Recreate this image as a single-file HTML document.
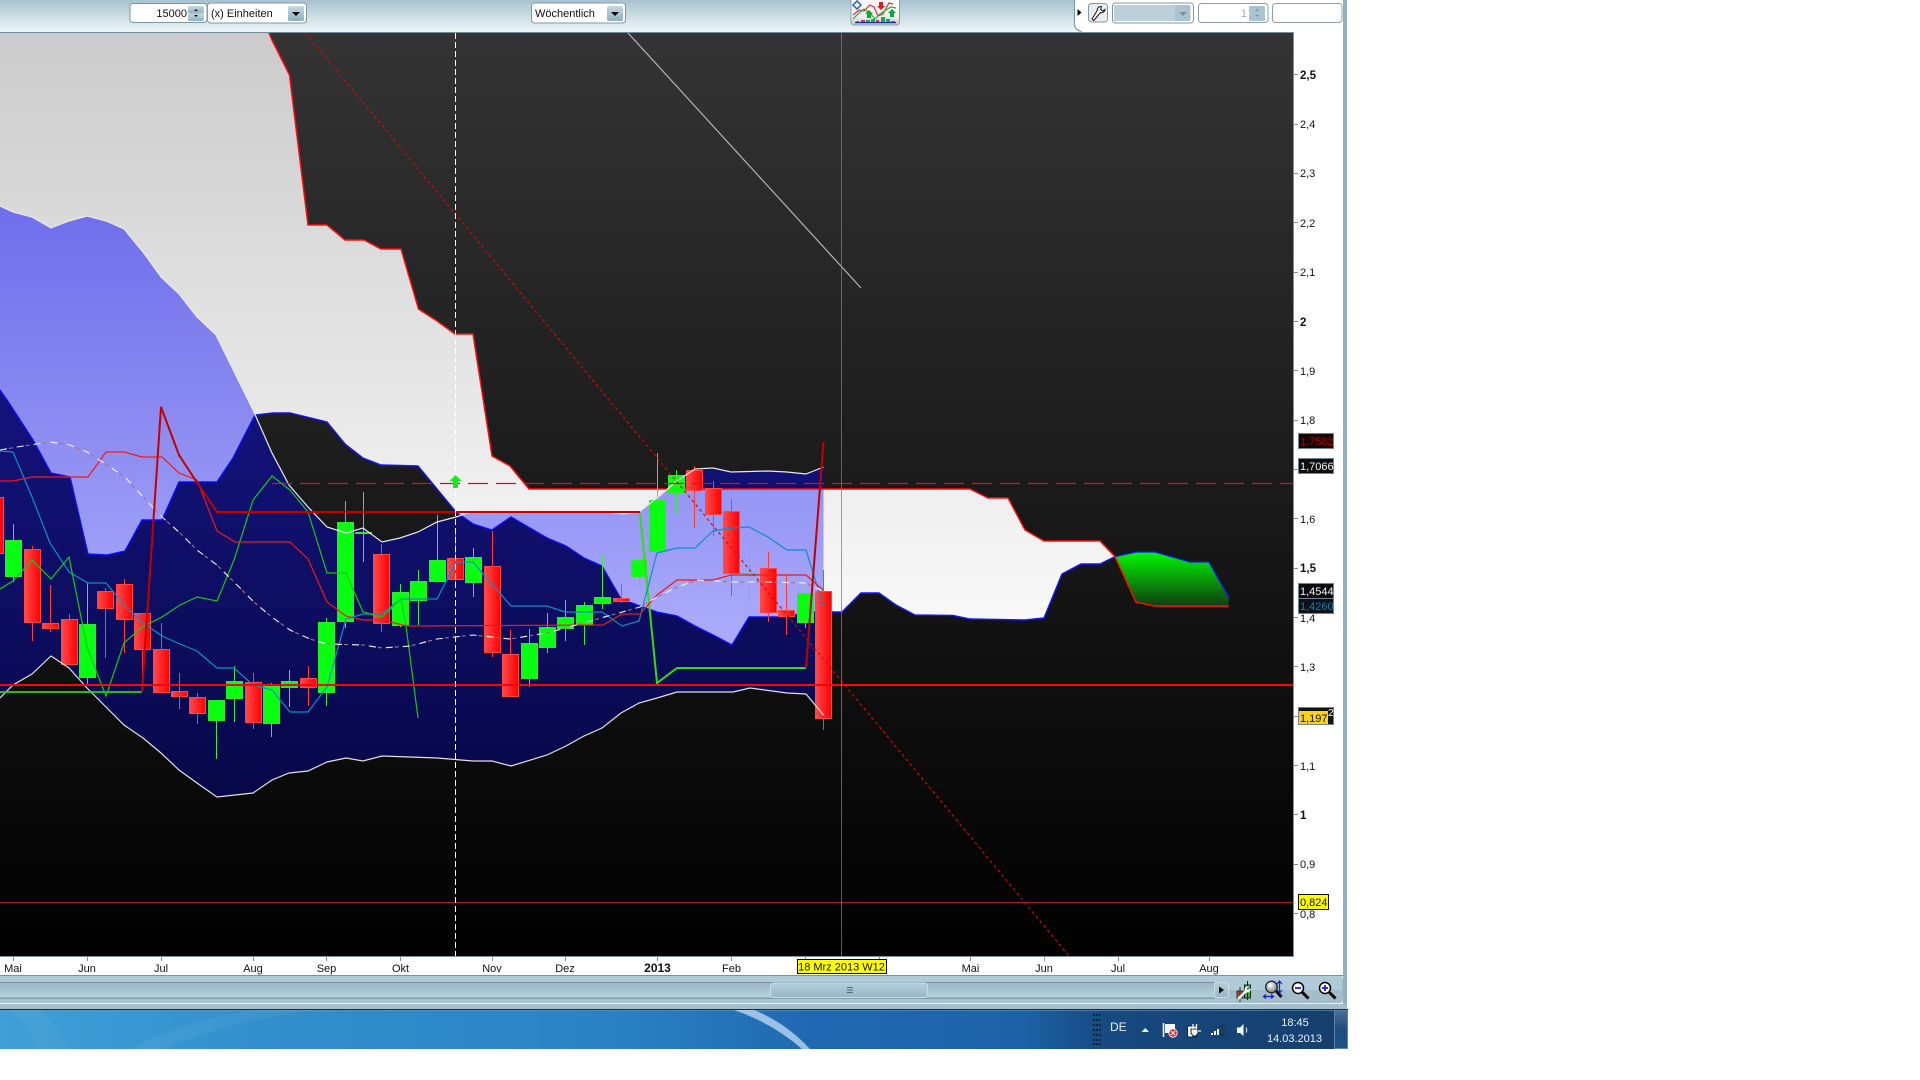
<!DOCTYPE html>
<html><head><meta charset="utf-8"><title>Chart</title>
<style>
html,body{margin:0;padding:0;background:#fff;width:1920px;height:1080px;overflow:hidden}
svg{position:absolute;left:0;top:0;display:block}
text{font-family:"Liberation Sans",sans-serif;font-size:11px;fill:#111}
.ya text{font-size:11px}
.ya text.b{font-size:11.5px}
.xa text{text-anchor:middle}
.b{font-weight:bold}
.w line{stroke-width:1}
.wr line{stroke:#ff3c3c}
.wg line{stroke:#3ee83e}
.cr rect{fill:url(#rc);stroke:#ff4646;stroke-width:1}
.cg rect{fill:#08ff10;stroke:#2cea2c;stroke-width:1}
</style></head><body>
<svg width="1920" height="1080" viewBox="0 0 1920 1080" xmlns="http://www.w3.org/2000/svg">
<defs>
<linearGradient id="bg" gradientUnits="userSpaceOnUse" x1="0" y1="33" x2="0" y2="956"><stop offset="0" stop-color="#343434"/><stop offset="1" stop-color="#000"/></linearGradient>
<linearGradient id="cl" gradientUnits="userSpaceOnUse" x1="0" y1="33" x2="0" y2="700"><stop offset="0" stop-color="#cbcbcb"/><stop offset="1" stop-color="#fff"/></linearGradient>
<linearGradient id="bb" gradientUnits="userSpaceOnUse" x1="0" y1="33" x2="0" y2="956"><stop offset="0" stop-color="#00f" stop-opacity=".56"/><stop offset="1" stop-color="#00f" stop-opacity=".19"/></linearGradient>
<linearGradient id="gk" gradientUnits="userSpaceOnUse" x1="0" y1="552" x2="0" y2="606"><stop offset="0" stop-color="#00f800"/><stop offset="1" stop-color="#0f3d0f"/></linearGradient>
<linearGradient id="rc" x1="0" x2="1" y1="0" y2="0"><stop offset="0" stop-color="#ff4a4a"/><stop offset="1" stop-color="#ff0000"/></linearGradient>
<linearGradient id="tb" x1="0" x2="0" y1="0" y2="1"><stop offset="0" stop-color="#a7c3cf"/><stop offset="1" stop-color="#f0f6f8"/></linearGradient>
<linearGradient id="btn" x1="0" x2="0" y1="0" y2="1"><stop offset="0" stop-color="#c6dae2"/><stop offset="1" stop-color="#8fb0be"/></linearGradient>
<linearGradient id="trk" x1="0" x2="0" y1="0" y2="1"><stop offset="0" stop-color="#98b4c0"/><stop offset="1" stop-color="#b6d5de"/></linearGradient>
<linearGradient id="thm" x1="0" x2="0" y1="0" y2="1"><stop offset="0" stop-color="#b4d0da"/><stop offset="1" stop-color="#98b6c3"/></linearGradient>
<linearGradient id="task" x1="0" x2="1" y1="0" y2="0"><stop offset="0" stop-color="#3f9fd6"/><stop offset=".2" stop-color="#328fcb"/><stop offset=".45" stop-color="#2a82c4"/><stop offset=".6" stop-color="#2069b2"/><stop offset=".76" stop-color="#1d62a6"/><stop offset=".82" stop-color="#174a80"/><stop offset="1" stop-color="#163e6c"/></linearGradient>
<linearGradient id="icn" x1="0" x2="0" y1="0" y2="1"><stop offset="0" stop-color="#fff"/><stop offset=".7" stop-color="#eee"/><stop offset="1" stop-color="#c4ccd0"/></linearGradient>
<linearGradient id="sd" x1="0" x2="0" y1="0" y2="1"><stop offset="0" stop-color="#4a6f94"/><stop offset=".5" stop-color="#1f4c7c"/><stop offset="1" stop-color="#1d5288"/></linearGradient>
<radialGradient id="glass" cx=".4" cy=".35" r=".7"><stop offset="0" stop-color="#fff"/><stop offset="1" stop-color="#777"/></radialGradient>
<clipPath id="ch"><rect x="0" y="33" width="1293" height="923"/></clipPath>
</defs>

<!-- top toolbar -->
<rect x="0" y="0" width="1075" height="32" fill="url(#tb)"/>
<rect x="0" y="32" width="1294" height="1" fill="#748c9a"/>
<path d="M1074.5 0V24Q1074.5 29 1079 30.5L1083 33" fill="none" stroke="#7f98a6" stroke-width="1.2"/>

<rect x="130" y="3.5" width="77" height="19" rx="3" fill="#fff" stroke="#8098a5"/>
<text x="187" y="17" text-anchor="end">15000</text>
<rect x="188" y="6" width="16" height="7.5" rx="1.5" fill="url(#btn)"/><rect x="188" y="13.5" width="16" height="7.5" rx="1.5" fill="url(#btn)"/>
<path d="M194 11h4l-2-2z M194 15h4l-2 2z" fill="#111"/>
<rect x="207.500" y="3" width="99" height="20" rx="3" fill="#fff" stroke="#8098a5"/>
<text x="211" y="17">(x) Einheiten</text>
<rect x="288" y="6" width="16" height="15" rx="1.5" fill="url(#btn)"/><path d="M292 12h8l-4 4z" fill="#000"/>
<rect x="531.500" y="3" width="94" height="20" rx="3" fill="#fff" stroke="#8098a5"/>
<text x="535" y="17">Wöchentlich</text>
<rect x="607" y="6" width="16" height="15" rx="1.5" fill="url(#btn)"/><path d="M611 12h8l-4 4z" fill="#000"/>

<!-- indicator button -->
<rect x="851" y="-3" width="48.500" height="28" rx="3" fill="url(#icn)" stroke="#8d9ea8"/>
<path d="M857 1l4 4-4 4-4-4z" fill="#fff" stroke="#1c5fd0" stroke-width="1.5"/>
<path d="M853 15l6-5 5 1 6-6 4 2 4 9 5-2 6-11 4 1" fill="none" stroke="#d9333a" stroke-width="1.2"/>
<path d="M853 19l6-6 5-4 6 4 5 6 5-5 6-4 5-3 5 1" fill="none" stroke="#22b03a" stroke-width="1.2"/>
<path d="M869 10l4 4h-2v4h-4v-4h-2z M892 9l4 4h-2v4h-4v-4h-2z" fill="#0fa83a"/>
<path d="M881 10l4-4h-2V2h-4v4h-2z" fill="#e01a22"/>
<g fill="#13b03f"><rect x="856" y="21" width="3" height="1"/><rect x="866" y="20" width="4" height="2"/><rect x="871" y="19" width="4" height="3"/><rect x="881" y="17" width="4" height="5"/><rect x="886" y="19" width="4" height="3"/></g>
<g fill="#e62e3a"><rect x="861" y="20" width="4" height="2"/><rect x="876" y="20" width="3" height="2"/><rect x="891" y="21" width="4" height="1"/></g>
<rect x="855" y="22" width="41" height="1.200" fill="#1228c8"/>

<!-- right controls -->
<path d="M1077.500 9v7l4-3.500z" fill="#000"/>
<rect x="1088.500" y="3.500" width="19" height="18.500" rx="3" fill="#e9eef0" stroke="#8098a5"/>
<path d="M1092 19l1.800 1.500 6.700-8c2 .5 4-.5 4.500-3l-2.300 1.500-2-1.500.7-3c-2.600-.2-4.400 1.600-4.200 4z" fill="#fff" stroke="#111" stroke-width="1"/>
<rect x="1112.500" y="3" width="81" height="20" rx="3" fill="#fff" stroke="#7f97a4"/>
<rect x="1114" y="5" width="62" height="16" fill="#bcd0da"/>
<rect x="1175" y="5" width="15.500" height="16" rx="1.500" fill="#a9c4d0"/><path d="M1179 12h8l-4 4z" fill="#7a8f9a"/>
<rect x="1198.500" y="3.500" width="69.500" height="19" rx="3" fill="#fff" stroke="#8ba0ac"/>
<text x="1247" y="17" text-anchor="end" style="fill:#9aa8b0">1</text>
<rect x="1249" y="6" width="16" height="7.500" rx="1.500" fill="#a9c4d0"/><rect x="1249" y="13.500" width="16" height="7.500" rx="1.500" fill="#a9c4d0"/>
<path d="M1255 11h4l-2-2z M1255 15h4l-2 2z" fill="#7a8f9a"/>
<rect x="1272.500" y="3.500" width="69.500" height="19" rx="3" fill="#fff" stroke="#8ba0ac"/>

<!-- side bar -->
<rect x="1343" y="0" width="4" height="1010" fill="#91b0c1"/>

<!-- CHART -->
<rect x="0" y="33" width="1293" height="923" fill="url(#bg)"/>
<g clip-path="url(#ch)">
<polygon fill="url(#cl)" points="-5,33 269,33 272,40 289.500,75 308,225 327,225 345,240 364,240 381,249 401,249 418.500,309 437,321 455,334 473,334 492,456 510,466 529,489 970,489 988,498 1008,498 1025,530 1044,541 1100,541 1115,556.600 1100,564 1081,564 1062,574 1044,618 1025,620 970,619 953,615.500 915,615 896,605 879,593 861,593 842,612 806,612 787,617 749,617 732,645 713,635 695,626 677,616 657,612 640,606 621,599 602,566 584,558 566,546 547,538 511,517 492,530 473,524 456,512 418,466 381,465 363,458 345,444 327,422 290,413 273,413 255,415 233,458 217,482 179,482 162,520 142,520 125,551 107,555 88,554 70,477 51,473 33,440 7,400 0,390 -5,390"/>
<polyline fill="none" stroke="#1414ff" stroke-width="1.400" points="0,390 7,400 33,440 51,473 70,477 88,554 107,555 125,551 142,520 162,520 179,482 217,482 233,458 255,415 273,413 290,413 327,422 345,444 363,458 381,465 418,466 456,512 473,524 492,530 511,517 547,538 566,546 584,558 602,566 621,599 640,606 657,612 677,616 695,626 713,635 732,645 749,617 787,617 806,612 842,612 861,593 879,593 896,605 915,615 953,615.500 970,619 1025,620 1044,618 1062,574 1081,564 1100,564 1115,556.600"/>

<!-- bollinger fill -->
<polygon fill="url(#bb)" points="0,206 13,212 32,217 51,228 69,221 87,216 106,221 124,229 143,252 161,277 179,294 197,317 216,335 253,410 272,453 289,485 308,507 327,527 346,533 363,528 382,542 400,538 418,532 437,522 456,517 473,511 603,511 622,514 639,512 657,498 677,481 695,469 713,468 731,472 768,471 787,472 806,474 823.500,467 823.500,715 806,694 787,693 750,688 733,692 677,692 657,698 639,703 621,713 602,728 584,736 566,746 547,755 511,766 492,761 473,761 437,758 382,756 363,761 346,758 327,762 308,771 289,773 272,780 253,793 217,797 197,783 179,770 161,753 143,738 124,725 87,688 69,668 51,656 32,674 13,685 0,698"/>

<!-- cloud upper line -->
<polyline fill="none" stroke="#ff0c0c" stroke-width="1.500" points="269,33 272,40 289.500,75 308,225 327,225 345,240 364,240 381,249 401,249 418.500,309 437,321 455,334 473,334 492,456 510,466 529,489 970,489 988,498 1008,498 1025,530 1044,541 1100,541 1115,556.600 1136,602 1155,606 1228.700,606"/>

<!-- green cloud -->
<polygon fill="url(#gk)" points="1115,556.600 1136,552 1155,552 1190,562 1209,562 1228.700,597 1228.700,606 1155,606 1136,602"/>
<polyline fill="none" stroke="#1414ff" stroke-width="1.300" points="1115,556.600 1136,552 1155,552 1190,562 1209,562 1228.700,597"/>
<polyline fill="none" stroke="#ff0c0c" stroke-width="1.400" points="1115,556.600 1136,602 1155,606 1228.700,606"/>

<!-- grey trend line, red diagonal -->
<line x1="628" y1="33" x2="861" y2="288" stroke="#b4b4b4" stroke-width="1.200"/>

<!-- wicks -->
<g class="wr" shape-rendering="crispEdges">
<line x1="32.500" y1="546" x2="32.500" y2="641"/><line x1="50.500" y1="585" x2="50.500" y2="632"/><line x1="69.500" y1="614" x2="69.500" y2="665"/><line x1="105.500" y1="588" x2="105.500" y2="658"/><line x1="124.500" y1="579" x2="124.500" y2="653"/><line x1="142.500" y1="613" x2="142.500" y2="692"/><line x1="161.500" y1="623" x2="161.500" y2="693"/><line x1="179.500" y1="673" x2="179.500" y2="709"/><line x1="197.500" y1="693" x2="197.500" y2="724"/><line x1="253.500" y1="673" x2="253.500" y2="729"/><line x1="308.500" y1="666" x2="308.500" y2="706"/><line x1="381.500" y1="544" x2="381.500" y2="632"/><line x1="455.500" y1="533" x2="455.500" y2="587"/><line x1="492.500" y1="531" x2="492.500" y2="657"/><line x1="510.500" y1="630" x2="510.500" y2="697"/><line x1="621.500" y1="584" x2="621.500" y2="603"/><line x1="694.500" y1="466" x2="694.500" y2="528"/><line x1="713.500" y1="481" x2="713.500" y2="536"/><line x1="731.500" y1="499" x2="731.500" y2="596"/><line x1="768.500" y1="552" x2="768.500" y2="622"/><line x1="786.500" y1="574" x2="786.500" y2="635"/><line x1="823.500" y1="570" x2="823.500" y2="730"/>
</g>
<g class="wg" shape-rendering="crispEdges">
<line x1="13.500" y1="524" x2="13.500" y2="582"/><line x1="87.500" y1="583" x2="87.500" y2="684"/><line x1="216.500" y1="700" x2="216.500" y2="759"/><line x1="234.500" y1="666" x2="234.500" y2="722"/><line x1="271.500" y1="683" x2="271.500" y2="737"/><line x1="289.500" y1="670" x2="289.500" y2="707"/><line x1="326.500" y1="618" x2="326.500" y2="706"/><line x1="345.500" y1="501" x2="345.500" y2="628"/><line x1="363.500" y1="492" x2="363.500" y2="562"/><line x1="400.500" y1="584" x2="400.500" y2="627"/><line x1="418.500" y1="570" x2="418.500" y2="625"/><line x1="437.500" y1="515" x2="437.500" y2="582"/><line x1="473.500" y1="548" x2="473.500" y2="597"/><line x1="529.500" y1="629" x2="529.500" y2="687"/><line x1="547.500" y1="613" x2="547.500" y2="653"/><line x1="565.500" y1="600" x2="565.500" y2="641"/><line x1="584.500" y1="602" x2="584.500" y2="645"/><line x1="602.500" y1="556" x2="602.500" y2="609"/><line x1="639.500" y1="560" x2="639.500" y2="586"/><line x1="657.500" y1="453" x2="657.500" y2="552"/><line x1="676.500" y1="470" x2="676.500" y2="514"/><line x1="749.500" y1="546" x2="749.500" y2="602"/><line x1="805.500" y1="590" x2="805.500" y2="628"/>
</g>
<!-- bodies -->
<g class="cr" shape-rendering="crispEdges">
<rect x="-13.500" y="497.500" width="17" height="56"/><rect x="24.500" y="549.500" width="16" height="73"/><rect x="42.500" y="623.500" width="16" height="5"/><rect x="61.500" y="619.500" width="16" height="45"/><rect x="97.500" y="591.500" width="16" height="17"/><rect x="116.500" y="584.500" width="16" height="35"/><rect x="134.500" y="613.500" width="16" height="36"/><rect x="153.500" y="649.500" width="16" height="43"/><rect x="171.500" y="691.500" width="16" height="5"/><rect x="189.500" y="697.500" width="16" height="16"/><rect x="245.500" y="682.500" width="16" height="40"/><rect x="300.500" y="678.500" width="16" height="9"/><rect x="373.500" y="554.500" width="16" height="69"/><rect x="447.500" y="558.500" width="16" height="21"/><rect x="484.500" y="566.500" width="16" height="86"/><rect x="502.500" y="654.500" width="16" height="42"/><rect x="613.500" y="598.500" width="16" height="3"/><rect x="686.500" y="470.500" width="16" height="20"/><rect x="705.500" y="488.500" width="16" height="26"/><rect x="723.500" y="511.500" width="16" height="62"/><rect x="760.500" y="568.500" width="16" height="44"/><rect x="778.500" y="610.500" width="16" height="6"/><rect x="815.500" y="591.500" width="16" height="127"/>
</g>
<g class="cg" shape-rendering="crispEdges">
<rect x="5.500" y="540.500" width="16" height="36"/><rect x="79.500" y="624.500" width="16" height="53"/><rect x="208.500" y="700.500" width="16" height="20"/><rect x="226.500" y="681.500" width="16" height="17"/><rect x="263.500" y="686.500" width="16" height="37"/><rect x="281.500" y="681.500" width="16" height="6"/><rect x="318.500" y="622.500" width="16" height="70"/><rect x="337.500" y="522.500" width="16" height="99"/><rect x="355.500" y="532.500" width="16" height="1"/><rect x="392.500" y="592.500" width="16" height="33"/><rect x="410.500" y="581.500" width="16" height="19"/><rect x="429.500" y="560.500" width="16" height="21"/><rect x="465.500" y="557.500" width="16" height="25"/><rect x="521.500" y="643.500" width="16" height="35"/><rect x="539.500" y="627.500" width="16" height="20"/><rect x="557.500" y="617.500" width="16" height="11"/><rect x="576.500" y="605.500" width="16" height="19"/><rect x="594.500" y="597.500" width="16" height="6"/><rect x="631.500" y="560.500" width="15" height="16"/><rect x="649.500" y="500.500" width="16" height="51"/><rect x="668.500" y="475.500" width="16" height="17"/><rect x="741.500" y="573.500" width="16" height="1"/><rect x="797.500" y="593.500" width="16" height="29"/>
</g>

<!-- BB lines -->
<polyline fill="none" stroke="#e8e8e8" stroke-width="1.200" points="0,206 13,212 32,217 51,228 69,221 87,216 106,221 124,229 143,252 161,277 179,294 197,317 216,335 253,410 272,453 289,485 308,507 327,527 346,533 363,528 382,542 400,538 418,532 437,522 456,517 473,511 603,511 622,514 639,512 657,498 677,481 695,469 713,468 731,472 768,471 787,472 806,474 823.500,467"/>
<polyline fill="none" stroke="#e0e0e0" stroke-width="1.200" points="0,698 13,685 32,674 51,656 69,668 87,688 124,725 143,738 161,753 179,770 197,783 217,797 253,793 272,780 289,773 308,771 327,762 346,758 363,761 382,756 437,758 473,761 492,761 511,766 547,755 566,746 584,736 602,728 621,713 639,703 657,698 677,692 733,692 750,688 787,693 806,694 823.500,715"/>

<!-- green thick + red horizontals -->
<polyline fill="none" stroke="#2ed206" stroke-width="1.800" points="0,692 142,692"/>
<polyline fill="none" stroke="#34dc08" stroke-width="2" points="640,513 657,683 677,668 806,668"/>
<line x1="272" y1="483.500" x2="1293" y2="483.500" stroke="#dd1010" stroke-width="1.200" stroke-dasharray="20 8"/>
<!-- teal -->
<polyline fill="none" stroke="#0a8fc4" stroke-width="1.200" points="0,451 13,452 32,497 50,543 69,572 88,583 106,583 124,605 142,622 162,636 180,644 197,651 217,668 234,668 253,685 272,690 290,712 308,712 327,687 346,619 363,614 382,614 401,599 437,599 456,562 473,562 511,606 547,606 565,612 602,612 622,626 639,621 657,553 677,548 695,548 713,531 731,528 749,527 768,537 787,550 806,550 823,605"/>
<!-- green thin -->
<polyline fill="none" stroke="#14c814" stroke-width="1.200" points="0,589 13,581 32,560 51,579 69,557 87,647 97,673 106,696 124,643 142,627 162,617 180,605 197,597 217,601 234,560 253,500 272,476 290,490 308,512 327,573 346,573 363,612 382,617 401,599 406,626 418,718"/>
<!-- red thin -->
<polyline fill="none" stroke="#f01818" stroke-width="1.200" points="0,481 13,481 32,477 88,477 106,452 124,452 142,457 162,457 179,473 197,480 217,531 235,542 290,542 308,559 327,602 346,616 363,620 382,620 407,626 603,625 622,614 640,614 657,595 677,580 713,580 731,575 806,575 823,590"/>
<!-- dashed MA -->
<polyline fill="none" stroke="#a0748a" stroke-width="1.100" stroke-dasharray="4 13" stroke-dashoffset="-9" points="0,450 17,447 50,442 70,445 87,452 107,465 125,477 143,497 162,517 180,533 197,550 217,565 237,585 255,603 273,618 290,630 310,639 327,644 363,645 382,648 410,646 437,639 473,635 510,639 547,633 583,623 640,607 657,597 677,587 697,580 732,582 768,582 806,583 823,591"/>
<polyline fill="none" stroke="#f4f0f4" stroke-width="1.100" stroke-dasharray="7 10" points="0,450 17,447 50,442 70,445 87,452 107,465 125,477 143,497 162,517 180,533 197,550 217,565 237,585 255,603 273,618 290,630 310,639 327,644 363,645 382,648 410,646 437,639 473,635 510,639 547,633 583,623 640,607 657,597 677,587 697,580 732,582 768,582 806,583 823,591"/>
<!-- thick dark red -->
<polyline fill="none" stroke="#c40000" stroke-width="2" points="142,692 161,407 179,455 198,484 217,512 640,512"/>
<line x1="806" y1="668" x2="823.500" y2="442" stroke="#c40000" stroke-width="2"/>
<!-- diagonal red -->
<line x1="305.600" y1="33" x2="1069" y2="956" stroke="#d00a0a" stroke-width="1.200" stroke-dasharray="3 3"/>
<!-- horizontals -->
<rect x="0" y="684" width="1293" height="2" fill="#f20808"/>
<rect x="0" y="902" width="1293" height="1" fill="#b01818"/>
<!-- vertical lines -->
<rect x="841" y="33" width="1" height="923" fill="#a86a6a" opacity=".75"/>
<line x1="455.500" y1="33" x2="455.500" y2="956" stroke="#fff" stroke-width="1" stroke-dasharray="6 3"/>
<!-- arrow -->
<path d="M455.500 475l6 6h-3.500v7h-5v-7h-3.500z" fill="#0cf020"/>
</g>

<!-- axis -->
<rect x="1293" y="33" width="1" height="923" fill="#7d929e"/>
<rect x="0" y="956" width="1294" height="1" fill="#7d929e"/>
<g fill="#7d929e">
<rect x="1294" y="74" width="4" height="1"/><rect x="1294" y="124" width="4" height="1"/><rect x="1294" y="173" width="4" height="1"/><rect x="1294" y="222" width="4" height="1"/><rect x="1294" y="272" width="4" height="1"/><rect x="1294" y="321" width="4" height="1"/><rect x="1294" y="370" width="4" height="1"/><rect x="1294" y="420" width="4" height="1"/><rect x="1294" y="469" width="4" height="1"/><rect x="1294" y="518" width="4" height="1"/><rect x="1294" y="568" width="4" height="1"/><rect x="1294" y="617" width="4" height="1"/><rect x="1294" y="666" width="4" height="1"/><rect x="1294" y="716" width="4" height="1"/><rect x="1294" y="765" width="4" height="1"/><rect x="1294" y="814" width="4" height="1"/><rect x="1294" y="864" width="4" height="1"/><rect x="1294" y="913" width="4" height="1"/>
<rect x="13" y="957" width="1" height="4"/><rect x="87" y="957" width="1" height="4"/><rect x="161" y="957" width="1" height="4"/><rect x="253" y="957" width="1" height="4"/><rect x="326" y="957" width="1" height="4"/><rect x="400" y="957" width="1" height="4"/><rect x="492" y="957" width="1" height="4"/><rect x="565" y="957" width="1" height="4"/><rect x="657" y="957" width="1" height="4"/><rect x="731" y="957" width="1" height="4"/><rect x="805" y="957" width="1" height="4"/><rect x="879" y="957" width="1" height="4"/><rect x="970" y="957" width="1" height="4"/><rect x="1044" y="957" width="1" height="4"/><rect x="1118" y="957" width="1" height="4"/><rect x="1209" y="957" width="1" height="4"/>
</g>
<g class="ya">
<text x="1300" y="79" class="b">2,5</text><text x="1300" y="128">2,4</text><text x="1300" y="177">2,3</text><text x="1300" y="227">2,2</text><text x="1300" y="276">2,1</text><text x="1300" y="326" class="b">2</text><text x="1300" y="375">1,9</text><text x="1300" y="424">1,8</text><text x="1300" y="523">1,6</text><text x="1300" y="572" class="b">1,5</text><text x="1300" y="622">1,4</text><text x="1300" y="671">1,3</text><text x="1300" y="770">1,1</text><text x="1300" y="819" class="b">1</text><text x="1300" y="868">0,9</text><text x="1300" y="918">0,8</text>
</g>
<!-- value labels -->
<rect x="1298.500" y="433.500" width="35" height="15" fill="#140404" stroke="#708592"/><text x="1300" y="445" style="fill:#a80000">1,7582</text>
<rect x="1298.500" y="458.500" width="35" height="15" fill="#0d0d0d" stroke="#708592"/><text x="1300" y="470" style="fill:#f4f4f4">1,7066</text>
<rect x="1298.500" y="583.500" width="35" height="15" fill="#0c0c10" stroke="#708592"/><text x="1300" y="595" style="fill:#f4f4f4">1,4544</text>
<rect x="1298.500" y="598.500" width="35" height="15" fill="#0c1018" stroke="#708592"/><text x="1300" y="610" style="fill:#0d80b8">1,4260</text>
<rect x="1298.500" y="707.500" width="35" height="17" fill="#111" stroke="#708592"/><rect x="1299" y="711" width="29" height="13" fill="#ffd21a"/><text x="1300" y="722">1,197</text><text x="1328" y="716" style="fill:#fff;font-size:10px">2</text>
<rect x="1298.500" y="894.500" width="30" height="15" fill="#ffff00" stroke="#111"/><text x="1300" y="906">0,824</text>

<g class="xa">
<text x="13" y="972">Mai</text><text x="87" y="972">Jun</text><text x="161" y="972">Jul</text><text x="253" y="972">Aug</text><text x="326.500" y="972">Sep</text><text x="400.500" y="972">Okt</text><text x="492" y="972">Nov</text><text x="565" y="972">Dez</text><text x="657.500" y="972" class="b" style="font-size:12px">2013</text><text x="731.500" y="972">Feb</text><text x="970.500" y="972">Mai</text><text x="1044" y="972">Jun</text><text x="1118" y="972">Jul</text><text x="1209" y="972">Aug</text>
</g>
<rect x="797.500" y="959.500" width="89" height="14" fill="#ffff00" stroke="#000"/>
<text x="841.500" y="970.500" text-anchor="middle">18 Mrz 2013 W12</text>

<!-- bottom toolbar -->
<rect x="0" y="975" width="1343" height="1" fill="#7d929e"/>
<path d="M0 976H1338Q1343 976 1343 980V1000Q1343 1003 1339 1003H0Z" fill="#a3bdc9"/>
<rect x="0" y="976" width="1342" height="14" fill="#aecbd7"/>
<rect x="0" y="982" width="1214" height="16" fill="url(#trk)"/>
<rect x="0" y="982" width="1214" height="1" fill="#7d929e"/><rect x="0" y="997.500" width="1214" height="1.200" fill="#7d929e"/>
<rect x="0" y="999" width="1236" height="4" fill="#abc6d1"/>
<rect x="0" y="1003" width="1343" height="1" fill="#e6f0f3"/>
<rect x="0" y="1004" width="1347" height="5" fill="#a7bfca"/>
<rect x="0" y="1009" width="1348" height="1" fill="#1e2a33"/>
<rect x="770.500" y="983" width="157" height="14.500" rx="3" fill="url(#thm)" stroke="#c8dde5"/>
<path d="M847 987.500h6M847 990h6M847 992.500h6" stroke="#556a75" stroke-width="1"/>
<rect x="1214.500" y="982.500" width="14" height="15" rx="2.500" fill="url(#thm)" stroke="#c8dde5"/>
<path d="M1219 986.500v7l5-3.500z" fill="#000"/>

<!-- candle/wrench icon -->
<rect x="1237" y="991" width="6" height="7" fill="#b04040" stroke="#333"/>
<path d="M1240 987v15" stroke="#333"/>
<rect x="1244.500" y="985" width="6" height="13" fill="#34b04a" stroke="#222"/>
<path d="M1247.500 981v19" stroke="#222"/>
<path d="M1238 998l7-7c-.5-2 .5-4 3-4.500l-1.500 2.500 1.500 1.500 2.500-1.500c-.5 2.500-2.500 3.500-4.500 3l-6.500 7z" fill="#fff" stroke="#fff" stroke-width=".8"/>
<!-- magnifier with arrows -->
<path d="M1275.500 990l6 7" stroke="#000" stroke-width="3"/>
<circle cx="1271.500" cy="987" r="5.800" fill="url(#glass)" stroke="#222" stroke-width="1.300"/>
<path d="M1279.500 982v10M1277 984l2.500-3 2.500 3M1277 990l2.500 3 2.500-3" fill="none" stroke="#1020e0" stroke-width="1.200"/>
<path d="M1264 996.500h9M1266 994.500l-2.500 2 2.500 2M1271 994.500l2.500 2-2.500 2" fill="none" stroke="#1020e0" stroke-width="1.200"/>
<!-- zoom out -->
<path d="M1302 992l6.500 6.500" stroke="#000" stroke-width="3"/>
<circle cx="1298" cy="988" r="5.500" fill="#fff" stroke="#000" stroke-width="1.500"/>
<path d="M1295 988h6" stroke="#1020e0" stroke-width="1.800"/>
<!-- zoom in -->
<path d="M1329 992l6.500 6.500" stroke="#000" stroke-width="3"/>
<circle cx="1325" cy="988" r="5.500" fill="#fff" stroke="#000" stroke-width="1.500"/>
<path d="M1322 988h6M1325 985v6" stroke="#1020e0" stroke-width="1.800"/>

<!-- taskbar -->
<rect x="0" y="1010" width="1348" height="39" fill="url(#task)"/>
<rect x="0" y="1010" width="1348" height="1" fill="#6a9cc4" opacity=".6"/>
<path d="M10 1010q20 15 28 39h30q-10-25-30-39z" fill="#fff" opacity=".04"/>
<path d="M130 1049q60-30 125-39h60q-90 12-150 39z" fill="#fff" opacity=".05"/>
<path d="M734 1010q38 13 68 39h8q-24-26-56-39z" fill="#cfe4f6" opacity=".7"/>
<!-- grip -->
<g fill="#10243c">
<rect x="1093" y="1014" width="2" height="2"/><rect x="1096" y="1014" width="2" height="2"/><rect x="1099" y="1014" width="2" height="2"/>
<rect x="1093" y="1019" width="2" height="2"/><rect x="1096" y="1019" width="2" height="2"/><rect x="1099" y="1019" width="2" height="2"/>
<rect x="1093" y="1024" width="2" height="2"/><rect x="1096" y="1024" width="2" height="2"/><rect x="1099" y="1024" width="2" height="2"/>
<rect x="1093" y="1029" width="2" height="2"/><rect x="1096" y="1029" width="2" height="2"/><rect x="1099" y="1029" width="2" height="2"/>
<rect x="1093" y="1034" width="2" height="2"/><rect x="1096" y="1034" width="2" height="2"/><rect x="1099" y="1034" width="2" height="2"/>
<rect x="1093" y="1039" width="2" height="2"/><rect x="1096" y="1039" width="2" height="2"/><rect x="1099" y="1039" width="2" height="2"/>
<rect x="1093" y="1043" width="2" height="2"/><rect x="1096" y="1043" width="2" height="2"/><rect x="1099" y="1043" width="2" height="2"/>
</g>
<text x="1110" y="1031" style="fill:#e6eff7;font-size:12px">DE</text>
<path d="M1141.500 1032h7.500l-3.700-4z" fill="#eef4f8"/>
<!-- flag -->
<path d="M1163.500 1023v14" stroke="#fff" stroke-width="1.500"/>
<path d="M1165 1024h10v9h-10z" fill="#f4f7fa"/>
<circle cx="1173" cy="1033" r="4.200" fill="#e0262c" stroke="#fff" stroke-width=".8"/>
<path d="M1171 1031l4 4M1175 1031l-4 4" stroke="#fff" stroke-width="1.200"/>
<!-- plug -->
<path d="M1187.500 1026h9v11h-9z" fill="#f4f7fa" stroke="#0d2038"/>
<path d="M1191 1029h7v4l-2 3h-3l-2-3z" fill="#f8f8f8" stroke="#0d2038"/>
<path d="M1193 1024v5M1196.500 1024v5M1198 1031h3" stroke="#f4f7fa" stroke-width="1.300"/>
<!-- signal -->
<g fill="#f4f7fa"><rect x="1211" y="1033" width="2" height="2"/><rect x="1214" y="1031" width="2" height="4"/><rect x="1217" y="1029" width="2" height="6"/></g>
<g fill="#29507c" stroke="#0d2038" stroke-width=".6"><rect x="1220" y="1026.500" width="2" height="8.500"/><rect x="1223" y="1024" width="2" height="11"/></g>
<!-- speaker -->
<path d="M1237 1027.500h3l3.500-3.500v12l-3.500-3h-3z" fill="#f4f7fa"/>
<path d="M1246 1027.500q1.500 2.500 0 5" fill="none" stroke="#dfe9f2" stroke-width="1"/>
<text x="1295" y="1026" text-anchor="middle" style="fill:#eaf1f7">18:45</text>
<text x="1294.500" y="1042" text-anchor="middle" style="fill:#eaf1f7">14.03.2013</text>
<!-- show desktop -->
<rect x="1334.500" y="1010.500" width="13" height="38" fill="url(#sd)" stroke="#5d83a6" stroke-width="1"/>
</svg>
</body></html>
